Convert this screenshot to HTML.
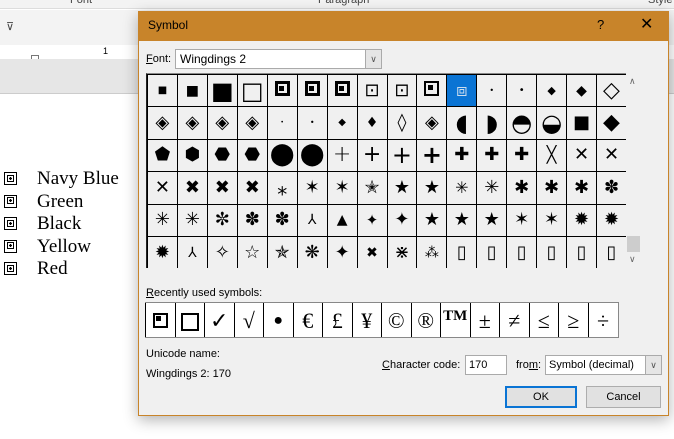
<!DOCTYPE html>
<html><head><meta charset="utf-8"><style>
*{box-sizing:border-box;margin:0;padding:0}
body{width:674px;height:439px;overflow:hidden;background:#fff;font-family:"Liberation Sans","DejaVu Sans",sans-serif;position:relative}
.abs{position:absolute}
.ui{font-family:"Liberation Sans","DejaVu Sans",sans-serif;font-size:11px;color:#000;white-space:nowrap}
#grid{left:146px;top:73px;width:481px;height:195px;border-top:1px solid #888;border-left:1px solid #222;overflow:hidden}
#grid table,#recent table{border-collapse:collapse;table-layout:fixed}
#grid td{width:30px;height:32.4px;border:1px solid #000;text-align:center;vertical-align:middle;font-family:"DejaVu Sans",sans-serif;font-size:18px;line-height:1;padding:0}
#recent td{width:29.5px;height:35px;border-left:1px solid #000;text-align:center;font-family:"Liberation Serif","DejaVu Serif",serif;font-size:22px;padding:0}
.fr{display:inline-block;width:15px;height:15px;border:3.5px solid #000;position:relative}
.fr::after{content:"";position:absolute;left:1.5px;top:1.5px;width:5px;height:5px;background:#000}
.lb{font-family:"Liberation Serif",serif;font-size:19px;color:#000;white-space:nowrap}
.bl{position:absolute;left:1px;top:4px;width:13px;height:13px;border:1.5px solid #000}
.bl::after{content:"";position:absolute;left:1.5px;top:1.5px;width:7px;height:7px;border:1px solid #000;box-sizing:border-box;background:radial-gradient(#000 40%,#fff 41%)}
</style></head><body>
<div class="abs" style="left:0;top:0;width:674px;height:9px;background:#f3f3f3;border-bottom:1px solid #ddd"></div>
<div class="abs ui" style="left:70px;top:-6px;color:#444">Font</div>
<div class="abs ui" style="left:318px;top:-6px;color:#444">Paragraph</div>
<div class="abs ui" style="left:648px;top:-6px;color:#444">Style</div>
<div class="abs" style="left:0;top:10px;width:674px;height:35px;background:#f3f3f3"></div>
<div class="abs ui" style="left:6px;top:20px;color:#444">⊽</div>
<div class="abs" style="left:0;top:45px;width:674px;height:14px;background:#fff"></div>
<div class="abs ui" style="left:103px;top:46px;font-size:9px">1</div>
<div class="abs" style="left:31px;top:55px;width:8px;height:10px;border:1px solid #777;background:#fff"></div>
<div class="abs" style="left:0;top:59px;width:674px;height:35px;background:#e6e6e6;border-bottom:1px solid #ccc"></div>
<div class="abs" style="left:3px;top:168px">
<div style="height:22.5px;position:relative;width:130px"><span class="bl"></span><span class="lb" style="position:absolute;left:34px;top:0">Navy Blue</span></div>
<div style="height:22.5px;position:relative"><span class="bl"></span><span class="lb" style="position:absolute;left:34px;top:0">Green</span></div>
<div style="height:22.5px;position:relative"><span class="bl"></span><span class="lb" style="position:absolute;left:34px;top:0">Black</span></div>
<div style="height:22.5px;position:relative"><span class="bl"></span><span class="lb" style="position:absolute;left:34px;top:0">Yellow</span></div>
<div style="height:22.5px;position:relative"><span class="bl"></span><span class="lb" style="position:absolute;left:34px;top:0">Red</span></div>
</div>
<div class="abs" style="left:138px;top:11px;width:531px;height:405px;background:#f0f0f0;border:1px solid #c8842a;box-shadow:0 4px 14px rgba(0,0,0,.3)"></div>
<div class="abs" style="left:138px;top:11px;width:531px;height:30px;background:#c8842a"></div>
<div class="abs ui" style="left:148px;top:18px;font-size:12px">Symbol</div>
<div class="abs ui" style="left:597px;top:17px;font-size:13px">?</div>
<div class="abs ui" style="left:640px;top:14px;font-size:16px">✕</div>
<div class="abs ui" style="left:146px;top:53px"><u>F</u>ont:</div>
<div class="abs" style="left:175px;top:49px;width:191px;height:20px;background:#fff;border:1px solid #aaa"></div>
<div class="abs ui" style="left:180px;top:52px;font-size:12px">Wingdings 2</div>
<div class="abs" style="left:365px;top:49px;width:17px;height:20px;background:#e5e5e5;border:1px solid #aaa;font-size:9px;text-align:center;line-height:18px;color:#555">∨</div>
<div id="grid" class="abs"><table>
<tr><td style="font-size:10px">■</td><td style="font-size:14px">■</td><td style="font-size:24px">■</td><td style="font-size:24px">□</td><td><span class="fr"></span></td><td><span class="fr"></span></td><td><span class="fr" style="border-width:3px"></span></td><td>⊡</td><td>⊡</td><td><span class="fr" style="border-width:2px"></span></td><td style="background:#0a74d4;color:#cde">⧈</td><td style="font-size:8px">•</td><td style="font-size:10px">•</td><td style="font-size:11px">◆</td><td style="font-size:14px">◆</td><td style="font-size:22px">◇</td></tr>
<tr><td>◈</td><td>◈</td><td>◈</td><td>◈</td><td style="font-size:6px">•</td><td style="font-size:8px">•</td><td style="font-size:10px">◆</td><td style="font-size:14px">♦</td><td>◊</td><td>◈</td><td style="font-size:24px">◖</td><td style="font-size:24px">◗</td><td style="font-size:24px">◓</td><td style="font-size:24px">◒</td><td>■</td><td style="font-size:22px">◆</td></tr>
<tr><td>⬟</td><td>⬢</td><td>⬣</td><td>⬣</td><td style="font-size:22px">⬤</td><td style="font-size:22px">⬤</td><td style="font-size:22px;font-weight:100">+</td><td style="font-size:22px">+</td><td style="font-size:24px">+</td><td style="font-size:24px;font-weight:bold">+</td><td>✚</td><td>✚</td><td>✚</td><td style="font-size:16px">╳</td><td>✕</td><td>✕</td></tr>
<tr><td>✕</td><td>✖</td><td>✖</td><td>✖</td><td style="font-size:20px">⁎</td><td>✶</td><td>✶</td><td>✭</td><td>★</td><td>★</td><td style="font-size:16px">✳</td><td>✳</td><td>✱</td><td>✱</td><td>✱</td><td>✽</td></tr>
<tr><td>✳</td><td>✳</td><td>✼</td><td>✽</td><td>✽</td><td style="font-size:14px">⅄</td><td style="font-size:14px">▲</td><td style="font-size:15px">✦</td><td>✦</td><td>★</td><td>★</td><td>★</td><td>✶</td><td>✶</td><td>✹</td><td>✹</td></tr>
<tr><td>✹</td><td style="font-size:14px">⅄</td><td>✧</td><td>☆</td><td>✯</td><td>❋</td><td>✦</td><td style="font-size:14px">✖</td><td>⋇</td><td style="font-size:14px">⁂</td><td>▯</td><td>▯</td><td>▯</td><td>▯</td><td>▯</td><td>▯</td></tr>
</table></div>
<div class="abs" style="left:626px;top:73px;width:15px;height:196px;background:#f0f0f0"></div>
<div class="abs" style="left:627px;top:236px;width:13px;height:16px;background:#cdcdcd"></div>
<div class="abs ui" style="left:629px;top:76px;font-size:9px;color:#666">∧</div>
<div class="abs ui" style="left:629px;top:254px;font-size:9px;color:#666">∨</div>
<div class="abs ui" style="left:146px;top:287px"><u>R</u>ecently used symbols:</div>
<div id="recent" class="abs" style="left:145px;top:302px;width:474px;height:36px;background:#fff;border:1px solid #888;border-left:none;overflow:hidden"><table><tr>
<td><span class="fr" style="width:15px;height:15px;border-width:2.5px"></span></td><td><span style="display:inline-block;width:18px;height:18px;border:2.5px solid #000;vertical-align:middle"></span></td><td>✓</td><td>√</td><td style="font-size:16px">●</td><td>€</td><td>£</td><td>¥</td><td>©</td><td>®</td><td style="font-size:15px;font-weight:bold;vertical-align:top;padding-top:5px">TM</td><td>±</td><td>≠</td><td>≤</td><td>≥</td><td>÷</td></tr></table></div>
<div class="abs ui" style="left:146px;top:348px">Unicode name:</div>
<div class="abs ui" style="left:146px;top:368px">Wingdings 2: 170</div>
<div class="abs ui" style="left:382px;top:359px"><u>C</u>haracter code:</div>
<div class="abs" style="left:465px;top:355px;width:42px;height:20px;background:#fff;border:1px solid #aaa"></div>
<div class="abs ui" style="left:469px;top:359px">170</div>
<div class="abs ui" style="left:516px;top:359px">fro<u>m</u>:</div>
<div class="abs" style="left:545px;top:355px;width:117px;height:20px;background:#fff;border:1px solid #aaa"></div>
<div class="abs ui" style="left:549px;top:359px">Symbol (decimal)</div>
<div class="abs" style="left:645px;top:355px;width:17px;height:20px;background:#e5e5e5;border:1px solid #aaa;font-size:9px;text-align:center;line-height:18px;color:#555">∨</div>
<div class="abs ui" style="left:505px;top:386px;width:72px;height:22px;background:#e1e1e1;border:2px solid #0a74d4;text-align:center;line-height:18px">OK</div>
<div class="abs ui" style="left:586px;top:386px;width:75px;height:22px;background:#e1e1e1;border:1px solid #adadad;text-align:center;line-height:20px">Cancel</div>
</body></html>
